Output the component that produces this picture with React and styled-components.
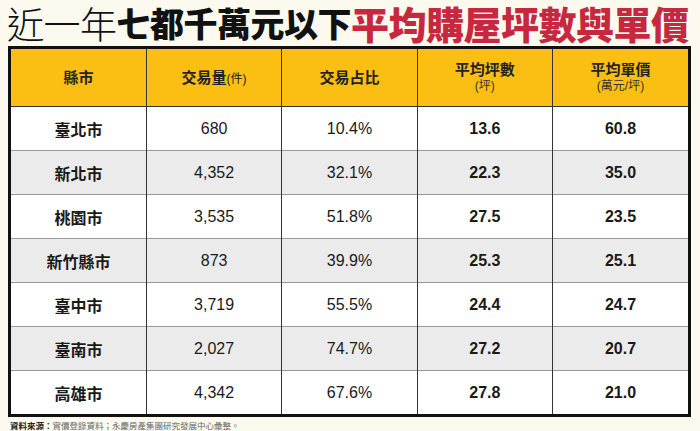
import React from "react";
import styled, { createGlobalStyle } from "styled-components";

const Global = createGlobalStyle`
  html, body { margin: 0; padding: 0; background: #fcfaee; }
  body { width: 700px; height: 431px; overflow: hidden; }
`;

const Page = styled.div`
  width: 700px;
  height: 431px;
  display: flex;
  flex-direction: column;
  background: #fcfaee;
  font-family: "Noto Sans CJK TC", "Noto Sans", sans-serif;
`;

const Title = styled.h1`
  margin: 0;
  height: 46px;
  padding-left: 7px;
  display: flex;
  align-items: center;
  white-space: nowrap;
  font-size: 36px;
  line-height: 1.2;
  letter-spacing: -0.5px;
`;

const Part = styled.span`
  font-weight: ${(p) => p.$weight};
  color: ${(p) => p.$color};
  font-size: ${(p) => p.$size}px;
`;

const TableWrap = styled.div`
  margin-left: 8px;
  width: 683px;
  border: 3px solid #111;
  box-sizing: border-box;
`;

const Table = styled.table`
  width: 100%;
  border-collapse: collapse;
  table-layout: fixed;
`;

const HeadCell = styled.th`
  background: #fbbe12;
  height: 57px;
  padding: 0;
  border-left: 1px solid #333;
  border-bottom: 1px solid #333;
  font-weight: 700;
  font-size: 15px;
  color: #222;
  line-height: 1.25;
  &:first-child { border-left: none; }
`;

const Sub = styled.span`
  font-size: 12px;
  font-weight: 400;
  font-family: "Liberation Sans", "Noto Sans CJK TC", sans-serif;
`;

const SubLine = styled.div`
  font-size: 12px;
  line-height: 1.3;
  font-weight: 400;
  color: #333;
  font-family: "Liberation Sans", "Noto Sans CJK TC", sans-serif;
`;

const Row = styled.tr`
  background: ${(p) => (p.$alt ? "#ebebeb" : "#ffffff")};
`;

const Cell = styled.td`
  height: 43px;
  padding: 0;
  text-align: center;
  border-left: 1px solid #333;
  border-top: 1px solid #9a9a9a;
  color: #1a1a1a;
  font-family: ${(p) => (p.$city ? '"Noto Sans CJK TC", sans-serif' : '"Liberation Sans", Arial, sans-serif')};
  font-size: 16px;
  font-weight: ${(p) => (p.$bold ? 700 : 400)};
  &:first-child { border-left: none; }
`;

const Footer = styled.div`
  padding: 3px 0 0 10px;
  font-size: 8.5px;
  color: #666;
  line-height: 1.2;
`;

const Strong = styled.span`
  font-weight: 700;
  color: #222;
`;

const rows = [
  ["臺北市", "680", "10.4%", "13.6", "60.8"],
  ["新北市", "4,352", "32.1%", "22.3", "35.0"],
  ["桃園市", "3,535", "51.8%", "27.5", "23.5"],
  ["新竹縣市", "873", "39.9%", "25.3", "25.1"],
  ["臺中市", "3,719", "55.5%", "24.4", "24.7"],
  ["臺南市", "2,027", "74.7%", "27.2", "20.7"],
  ["高雄市", "4,342", "67.6%", "27.8", "21.0"],
];

export default function App() {
  return (
    <Page>
      <Global />
      <Title>
        <Part $weight={300} $color="#111" $size={37}>近一年</Part>
        <Part $weight={900} $color="#111" $size={34}>七都千萬元以下</Part>
        <Part $weight={900} $color="#c8283f" $size={38}>平均購屋坪數與單價</Part>
      </Title>
      <TableWrap>
        <Table>
          <thead>
            <tr>
              <HeadCell>縣市</HeadCell>
              <HeadCell>交易量<Sub>(件)</Sub></HeadCell>
              <HeadCell>交易占比</HeadCell>
              <HeadCell>平均坪數<SubLine>(坪)</SubLine></HeadCell>
              <HeadCell>平均單價<SubLine>(萬元/坪)</SubLine></HeadCell>
            </tr>
          </thead>
          <tbody>
            {rows.map((r, i) => (
              <Row key={r[0]} $alt={i % 2 === 1}>
                <Cell $city $bold>{r[0]}</Cell>
                <Cell>{r[1]}</Cell>
                <Cell>{r[2]}</Cell>
                <Cell $bold>{r[3]}</Cell>
                <Cell $bold>{r[4]}</Cell>
              </Row>
            ))}
          </tbody>
        </Table>
      </TableWrap>
      <Footer>
        <Strong>資料來源：</Strong>實價登錄資料；永慶房產集團研究發展中心彙整。
      </Footer>
    </Page>
  );
}
